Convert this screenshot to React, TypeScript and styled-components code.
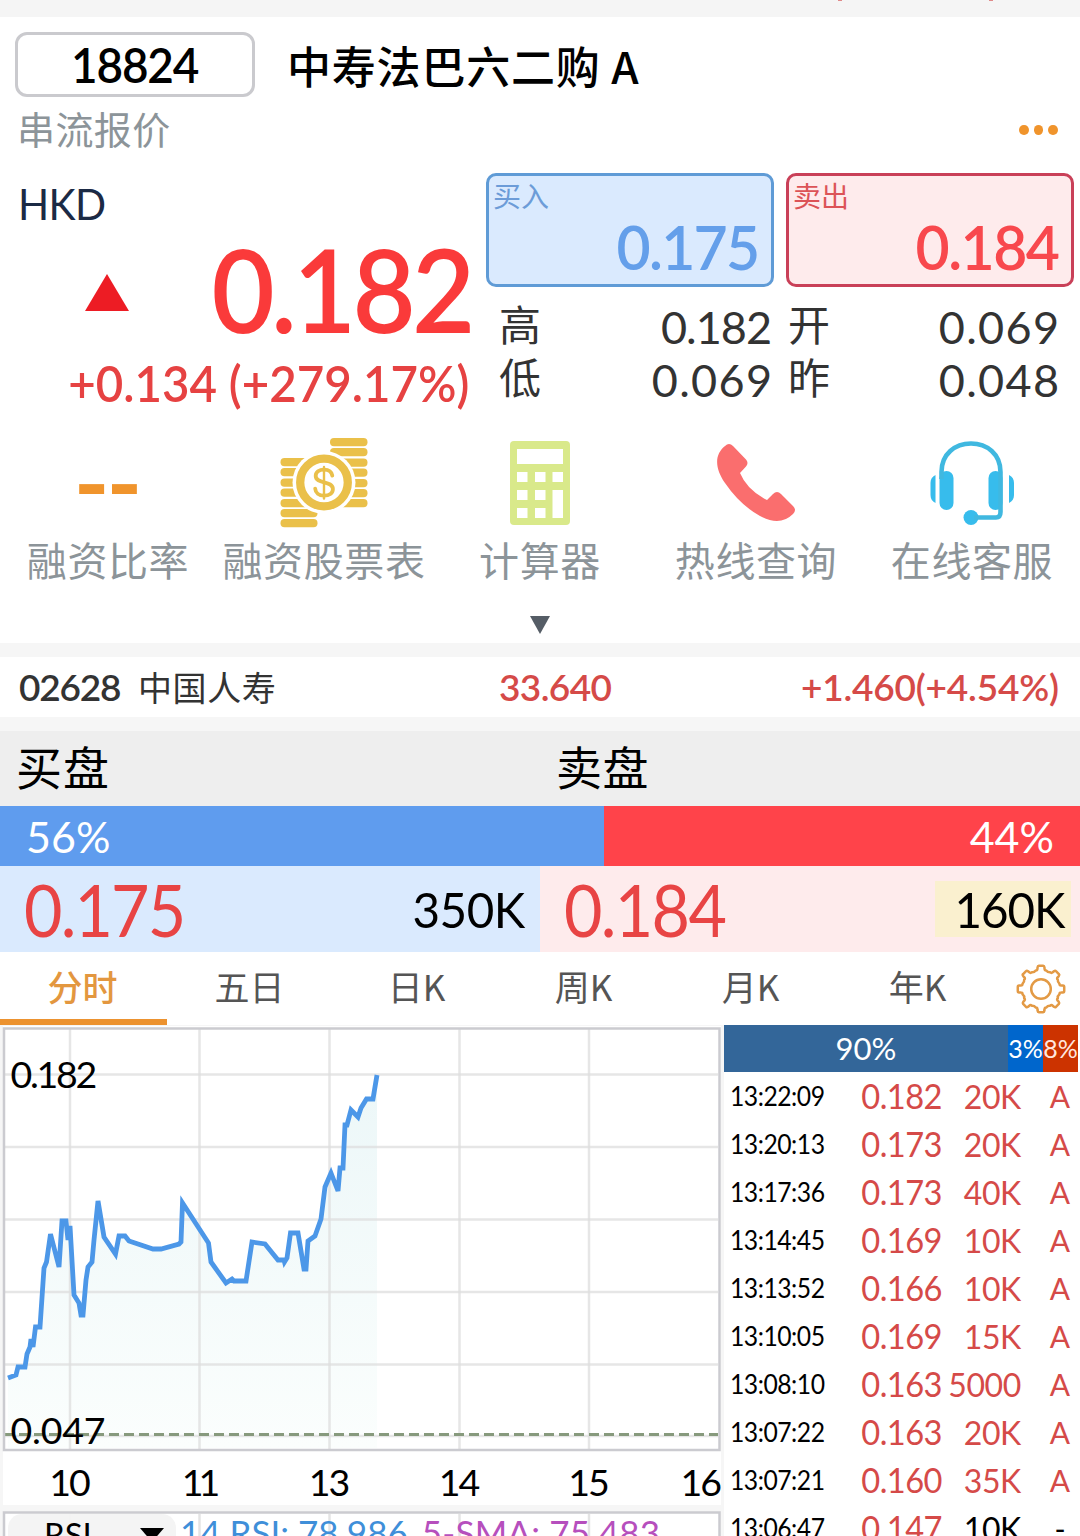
import React from "react";
import styled, { createGlobalStyle } from "styled-components";

const LATIN = `Lato, "Noto Sans CJK SC", sans-serif`;
const HAN = `"Noto Sans CJK SC", Lato, sans-serif`;

const GlobalStyle = createGlobalStyle`
  * { box-sizing: border-box; }
  html, body { margin: 0; padding: 0; background: #f6f6f6; }
  body { width: 1080px; height: 1536px; overflow: hidden; font-family: ${LATIN}; }
`;

const Screen = styled.main`
  width: 1080px;
  height: 1536px;
  overflow: hidden;
  display: flex;
  flex-direction: column;
  background: #f6f6f6;
`;

interface TextProps {
  $size: number;
  $weight?: number;
  $color?: string;
  $track?: number;
  $narrow?: number;
  $from?: string;
}

const Num = styled.span<TextProps>`
  display: block;
  font-family: ${LATIN};
  font-size: ${(p) => p.$size}px;
  font-weight: ${(p) => p.$weight ?? 400};
  color: ${(p) => p.$color ?? "#000"};
  letter-spacing: ${(p) => p.$track ?? 0}px;
  margin-right: ${(p) => -(p.$track ?? 0)}px;
  transform: ${(p) => (p.$narrow ? `scaleX(${p.$narrow})` : "none")};
  transform-origin: ${(p) => p.$from ?? "right"} center;
  line-height: 1;
  white-space: pre;
`;

const Han = styled.span<TextProps>`
  display: block;
  font-family: ${HAN};
  font-size: ${(p) => p.$size}px;
  font-weight: ${(p) => p.$weight ?? 400};
  color: ${(p) => p.$color ?? "#000"};
  letter-spacing: ${(p) => p.$track ?? 0}px;
  line-height: 1;
  white-space: pre;
`;

const TopStrip = styled.div`
  flex: none;
  height: 17px;
  background: #f5f5f5;
  display: flex;
  justify-content: flex-end;
  gap: 147px;
  padding-right: 87px;
`;
const Speck = styled.i`
  width: 4px;
  height: 1px;
  background: #e08a8a;
`;

const Quote = styled.section`
  flex: none;
  height: 626px;
  background: #fff;
  display: flex;
  flex-direction: column;
`;
const TitleRow = styled.div`
  display: flex;
  align-items: center;
  height: 80px;
  padding: 15px 0 0 15px;
`;
const CodeBox = styled.div`
  width: 240px;
  height: 65px;
  border: 3px solid #cacace;
  border-radius: 12px;
  display: flex;
  align-items: center;
  justify-content: center;
  margin-right: 32px;
`;
const SubRow = styled.div`
  height: 76px;
  display: flex;
  justify-content: space-between;
  padding: 12px 22px 0 17px;
`;
const Dots = styled.div`
  display: flex;
  gap: 5px;
  padding-top: 16px;
  i { width: 9.6px; height: 10px; border-radius: 50%; background: #f0942c; }
`;
const QuoteBody = styled.div`
  display: grid;
  grid-template-columns: 486px 588px;
  height: 255px;
`;
const LastCol = styled.div`
  display: flex;
  flex-direction: column;
`;
const Currency = styled.div`
  display: flex;
  height: 60px;
  padding: 9px 0 0 18px;
`;
const LastRow = styled.div`
  display: flex;
  align-items: center;
  justify-content: space-between;
  height: 112px;
  padding: 0 10px 0 85px;
  svg { margin-top: 7px; }
`;
const ChangeRow = styled.div`
  display: flex;
  justify-content: flex-end;
  padding: 14px 17px 0 0;
`;
const SideCol = styled.div`
  display: flex;
  flex-direction: column;
`;
const DealRow = styled.div`
  display: grid;
  grid-template-columns: 288px 288px;
  gap: 12px;
  height: 114px;
`;
const Deal = styled.button<{ $bg: string; $line: string }>`
  display: flex;
  flex-direction: column;
  align-items: flex-start;
  justify-content: space-between;
  padding: 5px 11px 7px 4px;
  margin: 0;
  background: ${(p) => p.$bg};
  border: 3px solid ${(p) => p.$line};
  border-radius: 10px;
  & > :last-child { align-self: flex-end; }
`;
const Stats = styled.div`
  display: grid;
  grid-template-columns: 273px 271px;
  column-gap: 16px;
  grid-auto-rows: 53px;
  padding: 14px 0 0 13px;
`;
const Stat = styled.div`
  display: flex;
  align-items: center;
  justify-content: space-between;
  & > :first-child { padding-bottom: 10px; }
`;

const Actions = styled.div`
  display: grid;
  grid-template-columns: repeat(5, 216px);
  height: 168px;
`;
const Action = styled.div`
  display: flex;
  flex-direction: column;
  align-items: center;
`;
const IconSlot = styled.div`
  height: 111px;
  padding-bottom: 1px;
  display: flex;
  align-items: center;
  justify-content: center;
`;
const RatioValue = styled.div`
  padding-bottom: 5px;
`;
const Expand = styled.div`
  display: flex;
  justify-content: center;
  padding-top: 20px;
`;

const Underlying = styled.section`
  flex: none;
  height: 60px;
  margin: 14px 0;
  background: #fff;
  display: grid;
  grid-template-columns: 119px 361px 200px 1fr;
  align-items: center;
  padding: 0 21px 1px 19px;
  & > :last-child { justify-self: end; }
`;

const BookHead = styled.div`
  flex: none;
  height: 75px;
  background: #eee;
  display: grid;
  grid-template-columns: 540px 540px;
  align-items: center;
  padding: 0 0 7px 16px;
`;
const RatioBar = styled.div`
  flex: none;
  height: 60px;
  display: grid;
  grid-template-columns: 604px 1fr;
`;
const Ratio = styled.div<{ $bg: string; $end?: boolean }>`
  display: flex;
  align-items: center;
  justify-content: ${(p) => (p.$end ? "flex-end" : "flex-start")};
  padding: 0 26px;
  background: ${(p) => p.$bg};
`;
const BookRow = styled.div`
  flex: none;
  height: 86px;
  display: grid;
  grid-template-columns: 1fr 1fr;
`;
const BookSide = styled.div<{ $bg: string }>`
  display: flex;
  align-items: center;
  justify-content: space-between;
  padding: 0 9px 0 24px;
  background: ${(p) => p.$bg};
`;
const Volume = styled.div<{ $bg?: string }>`
  display: flex;
  align-items: center;
  justify-content: flex-end;
  width: 136px;
  height: 56px;
  padding-right: 6px;
  background: ${(p) => p.$bg ?? "transparent"};
`;

const Tabs = styled.nav`
  flex: none;
  height: 73px;
  background: #fff;
  display: grid;
  grid-template-columns: repeat(6, 167px) 1fr;
`;
const Tab = styled.div<{ $active?: boolean }>`
  display: flex;
  align-items: center;
  justify-content: center;
  padding: 0 2px 0 0;
  border-bottom: 6px solid ${(p) => (p.$active ? "#ec922f" : "transparent")};
`;
const GearSlot = styled.div`
  display: flex;
  align-items: center;
  justify-content: center;
`;

const Market = styled.section`
  flex: 1;
  display: grid;
  grid-template-columns: 721px 354px;
  column-gap: 3px;
  background: #f6f6f6;
`;
const ChartPane = styled.div`
  position: relative;
  height: 511px;
  svg { display: block; }
`;
const Indicator = styled.div`
  position: absolute;
  left: 8px;
  top: 489px;
  width: 713px;
  height: 22px;
  overflow: hidden;
  display: flex;
`;
const IndicatorSelect = styled.div`
  width: 168px;
  height: 40px;
  flex: none;
  display: flex;
  gap: 48px;
  padding: 4px 0 0 36px;
  margin-right: 4px;
  border-radius: 14px;
  background: rgba(243, 243, 243, 0.94);
  svg { margin-top: 10px; }
`;
const Legend = styled.div`
  display: flex;
  gap: 14px;
  padding-top: 1px;
`;
const TapePane = styled.div`
  width: 356px;
  height: 511px;
  overflow: hidden;
  background: #fff;
`;
const FlowBar = styled.div`
  display: grid;
  grid-template-columns: 284px 35px 35px;
  height: 47px;
`;
const Flow = styled.div<{ $bg: string }>`
  display: flex;
  align-items: center;
  justify-content: center;
  background: ${(p) => p.$bg};
`;
const Tick = styled.div`
  display: grid;
  grid-template-columns: 110px 102px 79px 60px;
  align-items: center;
  height: 48px;
  padding-left: 6px;
  & > :nth-child(1) { justify-self: start; }
  & > :nth-child(2), & > :nth-child(3) { justify-self: end; }
  & > :nth-child(4) { justify-self: center; padding-left: 18px; }
`;

const RED = "#d54a48";

const UpIcon = () => (
  <svg width="44" height="37" viewBox="0 0 44 37"><path d="M22 0 44 37H0Z" fill="#ed1c24" /></svg>
);

const CoinsIcon = () => (
  <svg width="88" height="90" viewBox="0 0 88 90">
    <g fill="#eac04a">
      {[0, 10, 20.5, 30.5, 41, 51, 61].map((y) => (
        <rect key={y} x="50" y={y} width="37.5" height="8.2" rx="4" />
      ))}
      {[20, 30, 40.5, 50.5, 61, 71, 81].map((y) => (
        <rect key={y} x="0.5" y={y} width="37" height="8.2" rx="4" />
      ))}
    </g>
    <circle cx="44" cy="44.5" r="31.5" fill="#fff" />
    <circle cx="44" cy="44.5" r="23.8" fill="none" stroke="#eac04a" strokeWidth="8.3" />
    <g fill="none" stroke="#eac04a" strokeLinecap="round">
      <path d="M52.3 37.6c-.7-4-4-6-8.3-6-4.8 0-8.3 2.4-8.3 6.4 0 8.6 17.2 4 17.2 13 0 4.2-3.8 6.6-8.8 6.6-5.2 0-8.6-2.6-8.9-7" strokeWidth="3.8" />
      <path d="M44 29V60.5" strokeWidth="2.4" />
    </g>
  </svg>
);

const CalcIcon = () => (
  <svg width="60" height="84" viewBox="0 0 60 84">
    <rect width="60" height="84" rx="4" fill="#d9e98a" />
    <g fill="#fff">
      <rect x="7" y="8" width="46" height="15" />
      {[31, 49, 67].map((y) =>
        [7, 25].map((x) => <rect key={`${x}-${y}`} x={x} y={y} width="10.5" height="10" />)
      )}
      <rect x="42.5" y="31" width="10.5" height="10" />
      <rect x="42.5" y="49" width="10.5" height="28" />
    </g>
  </svg>
);

const PhoneIcon = () => (
  <svg width="78" height="78" viewBox="0 0 78 78">
    <path d="M8 2Q12-2 16 2L29 15.5Q32 19 29 22.5L23 29Q30 46 50 56L56 50Q60 46 64 50L76 62Q80 66 76 70Q63 83 43 72Q23 61 8 39C-3 23-2 10 8 2Z" fill="#fa6e6e" />
  </svg>
);

const HeadsetIcon = () => (
  <svg width="84" height="84" viewBox="0 0 84 84">
    <g fill="#37bcec">
      <path d="M5.5 34v28C2 60.5.5 57.5.5 54V42c0-3.5 1.5-6.500 5-8ZM79 34v28c3.5-1.5 5-4.500 5-8V42c0-3.5-1.500-6.500-5-8Z" />
      <rect x="9.5" y="30" width="14" height="39" rx="7" />
      <rect x="58.5" y="30" width="14" height="39" rx="7" />
      <circle cx="41" cy="76.5" r="7.5" />
    </g>
    <path d="M11.5 38V31C11.5 13 25 2.5 41 2.5S70.500 13 70.500 31V71Q70.500 76.5 66 76.5H44" fill="none" stroke="#40b8e0" strokeWidth="4.6" />
  </svg>
);

const gearPath = (() => {
  const pt = (r: number, deg: number) => {
    const a = (deg * Math.PI) / 180;
    return `${(25 + r * Math.sin(a)).toFixed(2)} ${(25 - r * Math.cos(a)).toFixed(2)}`;
  };
  let d = "";
  for (let i = 0; i < 8; i++) {
    const c = i * 45;
    d += `${i ? "L" : "M"}${pt(19.2, c - 16)}Q${pt(18.6, c - 11)} ${pt(20.5, c - 10)}L${pt(22, c - 9)}`;
    d += `Q${pt(23.5, c - 8)} ${pt(23.3, c - 5)}L${pt(23.3, c + 5)}Q${pt(23.5, c + 8)} ${pt(22, c + 9)}`;
    d += `L${pt(20.5, c + 10)}Q${pt(18.6, c + 11)} ${pt(19.2, c + 16)}Q${pt(17.8, c + 22.5)} ${pt(19.2, c + 29)}`;
  }
  return d + "Z";
})();

const GearIcon = () => (
  <svg width="50" height="50" viewBox="0 0 50 50" fill="none" stroke="#e39a45" strokeWidth="2.5" strokeLinejoin="round">
    <path d={gearPath} />
    <circle cx="25" cy="25" r="9.8" />
  </svg>
);

const series: [number, number][] = [
  [8, 1378], [16, 1375], [18, 1367], [25, 1367], [27, 1354], [30, 1347], [31, 1339], [33, 1347], [35.5, 1327], [40, 1327],
  [44, 1268], [46.5, 1262], [50.5, 1234], [59, 1267], [62, 1221], [66, 1221], [68, 1240], [70, 1226], [74, 1295],
  [79, 1303], [81, 1315], [83, 1315], [86, 1280], [88, 1267], [92, 1262], [94, 1240], [98, 1201], [104, 1237],
  [115.5, 1254], [119, 1236], [125, 1236], [129, 1241], [153, 1249], [161, 1249], [179, 1244], [181, 1242],
  [182.5, 1203], [208.5, 1243], [211, 1262], [226, 1283], [232, 1279], [234, 1281], [246, 1281], [252, 1242],
  [265, 1244], [278, 1260], [284, 1260], [284.5, 1262], [287, 1258], [290.5, 1233], [298, 1233], [304, 1269],
  [306, 1269], [308, 1241], [315, 1236], [321, 1219], [325, 1187], [331, 1173], [338, 1191], [340, 1168],
  [343, 1168], [345, 1125], [347, 1125], [351, 1110], [358, 1117], [361, 1108], [366.5, 1099], [373, 1099], [377, 1075],
];
const line = series.map(([x, y]) => `${x},${y - 1025}`).join(" ");
const gridX = [70, 199.5, 329.5, 459.5, 589];
const gridY = [49.5, 122, 194.5, 267, 339.5, 411];

const Chart = () => (
  <svg width="721" height="511" viewBox="0 0 721 511" fontFamily="Lato" fontSize="37.5">
    <defs>
      <linearGradient id="area" x1="0" y1="0" x2="0" y2="1">
        <stop offset="0" stopColor="#ecf7f8" />
        <stop offset="1" stopColor="#fbfefd" />
      </linearGradient>
    </defs>
    <rect x="3" y="1" width="718" height="479" fill="#fff" />
    <polygon points={`8,423 ${line} 377,423`} fill="url(#area)" />
    <g stroke="#dedede" strokeOpacity="0.75" strokeWidth="2.5">
      {gridX.map((x) => <path key={x} d={`M${x} 4V424`} />)}
      {gridY.map((y) => <path key={y} d={`M5 ${y}H718`} />)}
    </g>
    <path d="M4 409.5H718" stroke="#879a7d" strokeWidth="2.8" strokeDasharray="10 5" />
    <rect x="4" y="3.5" width="715.5" height="421.5" fill="none" stroke="#cbcbd0" strokeWidth="2.5" />
    <polyline points={line} fill="none" stroke="#4c97e8" strokeWidth="4.8" />
    <text x="10.5" y="62.5" letterSpacing="-2.3">0.182</text>
    <text x="10.5" y="418.5" letterSpacing="-0.2">0.047</text>
    {["10", "11", "13", "14", "15"].map((t, i) => (
      <text key={t} x={gridX[i] - 1} y="470.5" textAnchor="middle" letterSpacing={t === "11" ? -5 : -2}>{t}</text>
    ))}
    <text x="720" y="470.5" textAnchor="end" letterSpacing="-2">16</text>
    <rect x="4" y="487.5" width="715.5" height="40" fill="#fff" stroke="#cbcbd0" strokeWidth="2.5" />
    <g stroke="#e4e4e4" strokeWidth="2.5">
      {gridX.map((x) => <path key={x} d={`M${x} 489V511`} />)}
    </g>
  </svg>
);

const actions = [
  { label: "融资比率", icon: <RatioValue><Num $size={96} $weight={700} $color="#f0942c" $track={-3}>--</Num></RatioValue> },
  { label: "融资股票表", icon: <CoinsIcon /> },
  { label: "计算器", icon: <CalcIcon /> },
  { label: "热线查询", icon: <PhoneIcon /> },
  { label: "在线客服", icon: <HeadsetIcon /> },
];

const stats: [string, string, number][] = [
  ["高", "0.182", -1],
  ["开", "0.069", 1.3],
  ["低", "0.069", 1.3],
  ["昨", "0.048", 1.3],
];
const tabs = ["分时", "五日", "日K", "周K", "月K", "年K"];

const ticks = [
  ["13:22:09", "0.182", "20K", "A"],
  ["13:20:13", "0.173", "20K", "A"],
  ["13:17:36", "0.173", "40K", "A"],
  ["13:14:45", "0.169", "10K", "A"],
  ["13:13:52", "0.166", "10K", "A"],
  ["13:10:05", "0.169", "15K", "A"],
  ["13:08:10", "0.163", "5000", "A"],
  ["13:07:22", "0.163", "20K", "A"],
  ["13:07:21", "0.160", "35K", "A"],
  ["13:06:47", "0.147", "10K", "-"],
];

export default function App() {
  return (
    <>
      <GlobalStyle />
      <Screen>
        <TopStrip><Speck /><Speck /></TopStrip>
        <Quote>
          <TitleRow>
            <CodeBox><Num $size={48} $weight={600} $track={-1.2} $narrow={0.955} $from="center">18824</Num></CodeBox>
            <Han $size={44} $weight={500} $track={0.8}>中寿法巴六二购 A</Han>
          </TitleRow>
          <SubRow>
            <Han $size={38} $color="#8c9499" $track={0.4}>串流报价</Han>
            <Dots><i /><i /><i /></Dots>
          </SubRow>
          <QuoteBody>
            <LastCol>
              <Currency><Num $size={43} $color="#1b2a45" $track={-0.6} $narrow={0.95} $from="left">HKD</Num></Currency>
              <LastRow>
                <UpIcon />
                <Num $size={116} $weight={600} $color="#fa3a3a" $track={-4} $narrow={0.94}>0.182</Num>
              </LastRow>
              <ChangeRow><Num $size={49} $weight={600} $color="#e64242" $narrow={0.968}>+0.134 (+279.17%)</Num></ChangeRow>
            </LastCol>
            <SideCol>
              <DealRow>
                <Deal $bg="#daeafe" $line="#5f9bd6">
                  <Han $size={28} $color="#6c9cd8">买入</Han>
                  <Num $size={62} $weight={600} $color="#649fea" $track={-1.8} $narrow={0.95}>0.175</Num>
                </Deal>
                <Deal $bg="#feebec" $line="#c94058">
                  <Han $size={28} $color="#dc5357">卖出</Han>
                  <Num $size={62} $weight={600} $color="#f8484d" $track={-1.6} $narrow={0.95}>0.184</Num>
                </Deal>
              </DealRow>
              <Stats>
                {stats.map(([k, v, track]) => (
                  <Stat key={k}>
                    <Han $size={42} $color="#333">{k}</Han>
                    <Num $size={45} $color="#333" $track={track}>{v}</Num>
                  </Stat>
                ))}
              </Stats>
            </SideCol>
          </QuoteBody>
          <Actions>
            {actions.map((a) => (
              <Action key={a.label}>
                <IconSlot>{a.icon}</IconSlot>
                <Han $size={40} $color="#8c9499" $track={0.6}>{a.label}</Han>
              </Action>
            ))}
          </Actions>
          <Expand>
            <svg width="20" height="18" viewBox="0 0 20 18"><path d="M0 0H20L10 18Z" fill="#555d66" /></svg>
          </Expand>
        </Quote>

        <Underlying>
          <Num $size={37} $weight={600} $color="#333" $track={-1.2}>02628</Num>
          <Han $size={34} $color="#333" $track={0.6}>中国人寿</Han>
          <Num $size={37} $weight={600} $color={RED} $track={-0.6}>33.640</Num>
          <Num $size={37} $weight={600} $color={RED} $track={-0.2}>+1.460(+4.54%)</Num>
        </Underlying>

        <BookHead>
          <Han $size={46} $track={1}>买盘</Han>
          <Han $size={46} $track={0.5}>卖盘</Han>
        </BookHead>
        <RatioBar>
          <Ratio $bg="#5f9cee"><Num $size={43} $color="#fff">56%</Num></Ratio>
          <Ratio $bg="#ff434a" $end><Num $size={43} $color="#fff">44%</Num></Ratio>
        </RatioBar>
        <BookRow>
          <BookSide $bg="#daeafe">
            <Num $size={71} $color="#e84444" $track={-2} $narrow={0.935} $from="left">0.175</Num>
            <Volume><Num $size={49} $track={-0.5} $narrow={0.97}>350K</Num></Volume>
          </BookSide>
          <BookSide $bg="#feebec">
            <Num $size={71} $color="#e84444" $track={-1.8} $narrow={0.935} $from="left">0.184</Num>
            <Volume $bg="#faf0cf"><Num $size={49} $track={-1.1} $narrow={0.97}>160K</Num></Volume>
          </BookSide>
        </BookRow>

        <Tabs>
          {tabs.map((t, i) => (
            <Tab key={t} $active={i === 0}>
              <Han $size={35} $color={i === 0 ? "#e3973f" : "#555"} $weight={i === 0 ? 500 : 400}>{t}</Han>
            </Tab>
          ))}
          <GearSlot><GearIcon /></GearSlot>
        </Tabs>

        <Market>
          <ChartPane>
            <Chart />
            <Indicator>
              <IndicatorSelect>
                <Num $size={33}>RSI</Num>
                <svg width="24" height="14" viewBox="0 0 24 14"><path d="M0 0H24L12 14Z" /></svg>
              </IndicatorSelect>
              <Legend>
                <Num $size={35} $color="#3f8fd9">14 RSI: 78.986</Num>
                <Num $size={35} $color="#b64fbd" $track={0.2}>5-SMA: 75.483</Num>
              </Legend>
            </Indicator>
          </ChartPane>
          <TapePane>
            <FlowBar>
              <Flow $bg="#336699"><Num $size={31} $color="#fff">90%</Num></Flow>
              <Flow $bg="#0066cc"><Num $size={25} $color="#fff">3%</Num></Flow>
              <Flow $bg="#cc3300"><Num $size={25} $color="#ffe6df">8%</Num></Flow>
            </FlowBar>
            {ticks.map(([time, price, vol, side]) => (
              <Tick key={time}>
                <Num $size={26} $track={-0.5} $narrow={0.95} $from="left">{time}</Num>
                <Num $size={34} $color={RED} $track={-0.6} $narrow={0.96}>{price}</Num>
                <Num $size={33} $color={side === "-" ? "#000" : RED} $track={-0.4} $narrow={0.97}>{vol}</Num>
                <Num $size={30} $color={side === "-" ? "#000" : RED}>{side}</Num>
              </Tick>
            ))}
          </TapePane>
        </Market>
      </Screen>
    </>
  );
}
